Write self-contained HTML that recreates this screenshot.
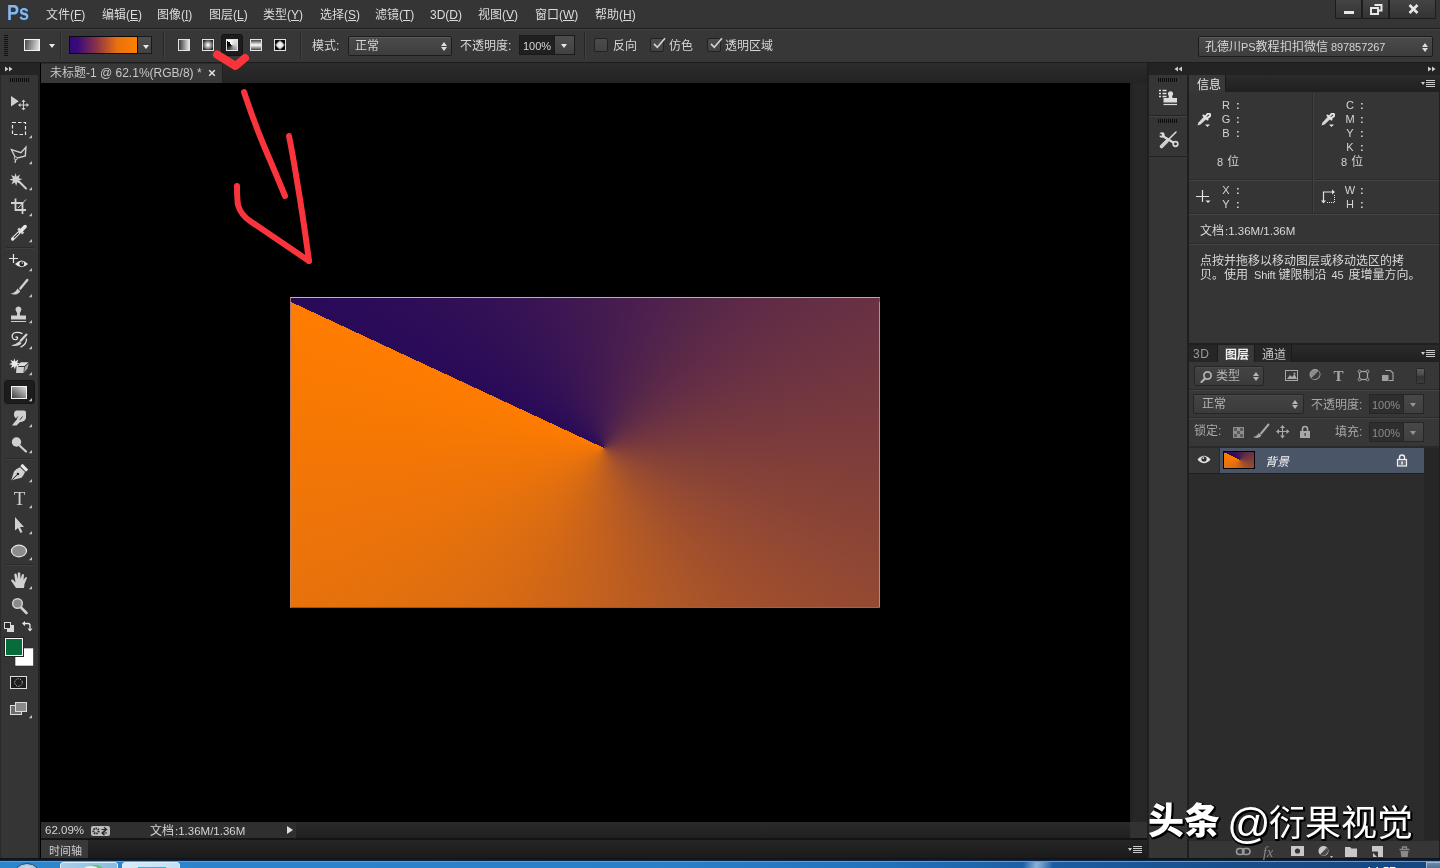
<!DOCTYPE html>
<html lang="zh-CN">
<head>
<meta charset="utf-8">
<title>未标题-1 @ 62.1%(RGB/8) *</title>
<style>
*{box-sizing:border-box;margin:0;padding:0}
html,body{width:1440px;height:868px;overflow:hidden;background:#000}
body{position:relative;font-family:"Liberation Sans","Noto Sans CJK SC",sans-serif;font-size:12px;color:#d6d6d6;line-height:1}
#root{position:absolute;left:0;top:0;width:1440px;height:868px;will-change:transform}
.a{position:absolute}
.t{position:absolute;white-space:nowrap;line-height:14px;height:14px}
/* ---------- top bars ---------- */
#menubar{left:0;top:0;width:1440px;height:28px;background:#353535}
#menuline{left:0;top:28px;width:1440px;height:1px;background:#1c1c1c}
#optbar{left:0;top:29px;width:1440px;height:33px;background:#373737;border-top:1px solid #444}
#optline{left:0;top:62px;width:1440px;height:1px;background:#1c1c1c}
.menu{top:8px;color:#dcdcdc;font-size:12px}
.menu u{text-decoration-thickness:1px;text-underline-offset:1px}

#pslogo{left:7px;top:1px;font-size:22px;font-weight:bold;color:#8fb6e0;line-height:24px;transform:scaleX(.82);transform-origin:0 0;text-shadow:1px 0 0 #123e70,0 1px 0 #123e70}
#winbtns{left:1335px;top:0;width:101px;height:18px}
.wb{top:0;height:19px;background:linear-gradient(#444,#333);border:1px solid #1d1d1d;border-top:none}

#grip1{left:4px;top:35px;width:4px;height:21px;background:repeating-linear-gradient(180deg,#111 0 1px,transparent 1px 2px)}
.l{font-size:11px;letter-spacing:-.1px}
.l2{font-size:11.500px;margin-left:1px}
.tri{width:0;height:0;border-left:3.5px solid transparent;border-right:3.5px solid transparent;border-top:4px solid #e8e8e8}
.vsep{top:32px;width:2px;height:26px;border-left:1px solid #262626;border-right:1px solid #434343}
#gradsw{left:69px;top:36px;width:69px;height:18px;border:1px solid #0a0a0a;background:linear-gradient(90deg,#33087a 0%,#3a0b78 12%,#8a3348 40%,#e8700e 70%,#ff8000 100%)}
#gradbtn{left:138px;top:36px;width:14px;height:18px;background:linear-gradient(#4e4e4e,#424242);border:1px solid #1a1a1a;border-left:none}
#gsel{left:221px;top:34px;width:22px;height:22px;background:#1c1c1c;border-radius:3px;border:1px solid #141414}
.gt{top:39px;width:12px;height:12px;border:1px solid #e4e4e4}
.dd{background:linear-gradient(#4b4b4b,#3d3d3d);border:1px solid #1c1c1c;border-radius:2px;box-shadow:inset 0 1px 0 #5a5a5a}
.ud{width:7px;height:9px}
.ud:before,.ud:after{content:"";position:absolute;left:0;width:0;height:0;border-left:3.5px solid transparent;border-right:3.5px solid transparent}
.ud:before{top:0;border-bottom:4px solid #dcdcdc}
.ud:after{top:5px;border-top:4px solid #dcdcdc}
#opin{left:519px;top:35px;width:36px;height:20px;background:#202020;border:1px solid #1a1a1a}
#opbtn{left:555px;top:35px;width:20px;height:20px;background:linear-gradient(#4e4e4e,#424242);border:1px solid #1a1a1a;border-left:none}
.cb{width:14px;height:14px;background:linear-gradient(#4c4c4c,#424242);border:1px solid #222;border-radius:2px}
/* ---------- canvas ---------- */
#tabbar{left:41px;top:63px;width:1106px;height:20px;background:linear-gradient(#2c2c2c,#232323)}
#doctab{left:41px;top:64px;width:182px;height:19px;background:#383838;border-right:1px solid #1f1f1f}
#canvas{left:41px;top:83px;width:1089px;height:739px;background:#000}
#vscroll{left:1130px;top:83px;width:17px;height:739px;background:linear-gradient(90deg,#212121,#272727 30%,#262626)}
#corner{left:1130px;top:822px;width:17px;height:16px;background:#323232}
#status{left:41px;top:822px;width:1089px;height:16px;background:linear-gradient(#2b2b2b,#1f1f1f)}
#statusl{left:41px;top:822px;width:255px;height:16px;background:#2f2f2f}
#timeline{left:41px;top:838px;width:1106px;height:20px;background:linear-gradient(#141414 0 2px,#252525 2px,#1b1b1b 20px)}
#tltab{left:41px;top:840px;width:47px;height:18px;background:#393939}

#doc{left:290px;top:297px;width:590px;height:311px;background:conic-gradient(from 295deg at 312.7px 149.8px,#290a59 0.0deg,#2f0e57 15.0deg,#351255 30.0deg,#3b1653 45.0deg,#421a51 60.0deg,#491e4f 75.0deg,#51234c 90.0deg,#5a2948 105.0deg,#642e45 120.0deg,#6e3441 135.0deg,#793a3d 150.0deg,#844138 165.0deg,#904734 180.0deg,#9c4d2f 195.0deg,#a7532a 210.0deg,#b35925 225.0deg,#be5e20 240.0deg,#c8631b 255.0deg,#d26816 270.0deg,#db6c12 285.0deg,#e3700e 300.0deg,#eb730a 315.0deg,#f27607 330.0deg,#f87903 345.0deg,#ff7c00 360.0deg);border:1px solid rgba(205,150,135,.5);border-top-color:rgba(200,190,215,.8);border-left-color:rgba(230,170,120,.6)}
#sticon{left:91px;top:826px;width:19px;height:10px;background:#bdbdbd;border-radius:2px}
.pmenu{width:14px;height:8px;background:linear-gradient(#ccc 0 1px,transparent 1px 2px,#ccc 2px 3px,transparent 3px 4px,#ccc 4px 5px,transparent 5px 6px,#ccc 6px 7px,transparent 7px) no-repeat 5px 0/9px 8px}
.pmenu:before{content:"";position:absolute;left:0;top:2px;border-left:2.5px solid transparent;border-right:2.5px solid transparent;border-top:3px solid #ccc}
/* ---------- toolbar ---------- */
#tbhead{left:0;top:63px;width:40px;height:12px;background:#242424}
#toolbar{left:0;top:75px;width:40px;height:783px;background:#353535;border-left:1px solid #2a2a2a;border-right:2px solid #222}
/* ---------- right ---------- */
#rightbg{left:1147px;top:63px;width:293px;height:795px;background:#1f1f1f}
#rhead{left:1149px;top:63px;width:291px;height:12px;background:#232323}
#iconstrip{left:1149px;top:75px;width:38px;height:783px;background:#353535}
#infopanel{left:1189px;top:75px;width:250px;height:268px;background:#353535}
#layerpanel{left:1189px;top:345px;width:250px;height:513px;background:#2c2c2c}

.ptabbar{background:linear-gradient(#2a2a2a,#202020)}
.ptab{background:#262626;color:#9a9a9a;border-right:1px solid #1a1a1a}
.ptab.on{background:#383838;color:#e6e6e6}
.hline{height:2px;border-top:1px solid #2b2b2b;border-bottom:1px solid #444}
.inf{font-size:11px;color:#d4d4d4}

.dim{background:linear-gradient(#434343,#3b3b3b);border-color:#262626;box-shadow:inset 0 1px 0 #4a4a4a}
.lin{width:35px;height:20px;background:#2e2e2e;border:1px solid #262626;color:#8c8c8c}
.lbtn{width:20px;height:20px;background:linear-gradient(#484848,#404040);border:1px solid #262626;border-left:none}
#thumb{left:1223px;top:451px;width:32px;height:18px;border:1px solid #000;background:conic-gradient(from 295deg at 52.9% 48.2%,#290a59 0.0deg,#2f0e57 15.0deg,#351255 30.0deg,#3b1653 45.0deg,#421a51 60.0deg,#491e4f 75.0deg,#51234c 90.0deg,#5a2948 105.0deg,#642e45 120.0deg,#6e3441 135.0deg,#793a3d 150.0deg,#844138 165.0deg,#904734 180.0deg,#9c4d2f 195.0deg,#a7532a 210.0deg,#b35925 225.0deg,#be5e20 240.0deg,#c8631b 255.0deg,#d26816 270.0deg,#db6c12 285.0deg,#e3700e 300.0deg,#eb730a 315.0deg,#f27607 330.0deg,#f87903 345.0deg,#ff7c00 360.0deg)}
#wm{left:1150px;top:798px;white-space:nowrap;color:#fff;line-height:48px;height:48px;text-shadow:2px 2px 0 #000,1px 1px 0 #000,2px 0 0 #000,0 2px 0 #000;font-family:"Liberation Sans","Noto Sans CJK SC",sans-serif}
#wm .w1{font-size:36px;font-weight:900}
#wm .w3{font-size:43px;font-weight:400;white-space:pre}
#wm .w2{font-size:36px;font-weight:400}
/* ---------- taskbar ---------- */
#taskbar{left:0;top:858px;width:1440px;height:10px;background:linear-gradient(#101418 0 1px,#0b1a30 1px 2px,#0b2346 2px 3px,#6b9bd0 3px 4px,transparent 4px),linear-gradient(90deg,#2c86cd 0,#2a80c8 45%,#2273bd 60%,#1b5ea4 72%,#174f8c 85%,#154680 100%);overflow:hidden}
#taskbar .tb{position:absolute;top:4px;height:8px;border:1px solid #dff0fb;border-radius:3px 3px 0 0}
#clock{left:1366px;top:866px;font-size:12px;color:#fff;line-height:12px;height:3px;overflow:hidden}
</style>
</head>
<body>
<div id="root">
<div class="a" id="menubar"></div>
<div class="a" id="menuline"></div>
<div class="a" id="optbar"></div>
<div class="a" id="optline"></div>
<div class="a" id="tabbar"></div>
<div class="a" id="doctab"></div>
<div class="a" id="canvas"></div>
<div class="a" id="vscroll"></div>
<div class="a" id="corner"></div>
<div class="a" id="status"></div>
<div class="a" id="statusl"></div>
<div class="a" id="timeline"></div>
<div class="a" id="tltab"></div>
<div class="a" id="tbhead"></div>
<div class="a" id="toolbar"></div>
<div class="a" id="rightbg"></div>
<div class="a" id="rhead"></div>
<div class="a" id="iconstrip"></div>
<div class="a" id="infopanel"></div>
<div class="a" id="layerpanel"></div>
<div class="a" id="taskbar"><div class="a" style="left:12px;top:5px;width:30px;height:30px;border-radius:50%;background:radial-gradient(circle at 50% 30%,#e8f0f6,#8fa9bf 60%,#5a7a96);border:1px solid #1d4d7c"></div><div class="tb" style="left:60px;width:58px;background:linear-gradient(90deg,#a9cde8,#8cbcdf)"><i class="a" style="left:22px;top:3px;width:16px;height:8px;border-radius:50%;background:#e9f6e4;box-shadow:4px -1px 0 #6cc46a"></i></div><div class="tb" style="left:122px;width:58px;background:linear-gradient(90deg,#d8ebf7,#c4dff2)"><i class="a" style="left:15px;top:4px;width:28px;height:6px;background:#0d2a55;border-top:1px solid #2fb4dc"></i></div><div class="a" style="left:1020px;top:4px;width:36px;height:8px;background:linear-gradient(100deg,transparent 10%,rgba(170,205,235,.75) 45%,rgba(170,205,235,.55) 60%,transparent 90%)"></div><div class="a" style="left:1426px;top:4px;width:14px;height:8px;background:linear-gradient(#6d8aa8,#4b6c90);border:1px solid #9fb6cf;border-right:none"></div></div>
<div class="a" id="clock">14:57</div>
<div class="a" id="pslogo">Ps</div>
<div class="t menu" style="left:46px">文件(<u>F</u>)</div>
<div class="t menu" style="left:102px">编辑(<u>E</u>)</div>
<div class="t menu" style="left:157px">图像(<u>I</u>)</div>
<div class="t menu" style="left:209px">图层(<u>L</u>)</div>
<div class="t menu" style="left:263px">类型(<u>Y</u>)</div>
<div class="t menu" style="left:320px">选择(<u>S</u>)</div>
<div class="t menu" style="left:375px">滤镜(<u>T</u>)</div>
<div class="t menu" style="left:430px">3D(<u>D</u>)</div>
<div class="t menu" style="left:478px">视图(<u>V</u>)</div>
<div class="t menu" style="left:535px">窗口(<u>W</u>)</div>
<div class="t menu" style="left:595px">帮助(<u>H</u>)</div>
<div class="a" id="winbtns"><div class="a wb" style="left:0;width:27px"><i class="a" style="left:8px;top:11px;width:10px;height:3px;background:#e6e6e6"></i></div><div class="a wb" style="left:27px;width:27px"><svg class="a" style="left:7px;top:4px" width="13" height="11" viewBox="0 0 13 11"><path d="M4.5 1h7v5.5h-2.5" fill="none" stroke="#e6e6e6" stroke-width="2"/><rect x="1" y="4" width="7" height="6" fill="none" stroke="#e6e6e6" stroke-width="2"/></svg></div><div class="a wb" style="left:54px;width:47px"><svg class="a" style="left:18px;top:4px" width="11" height="10" viewBox="0 0 11 10"><path d="M1.5 1l8 8M9.5 1l-8 8" stroke="#e6e6e6" stroke-width="2.6"/></svg></div></div>
<!--MENU-->
<div class="a" id="grip1"></div>
<div class="a gicon" style="left:24px;top:39px;width:16px;height:12px;background:linear-gradient(100deg,#4a4a4a,#e8e8e8);border:1px solid #f4f4f4"></div>
<div class="a tri" style="left:49px;top:44px"></div>
<div class="a vsep" style="left:60px"></div>
<div class="a" id="gradsw"></div>
<div class="a" id="gradbtn"><div class="a tri" style="left:5px;top:8px"></div></div>
<div class="a vsep" style="left:163px"></div>
<div class="a" id="gsel"></div>
<div class="a gt" style="left:178px;background:linear-gradient(90deg,#3a3a3a,#e6e6e6)"></div>
<div class="a gt" style="left:202px;background:radial-gradient(circle at 50% 50%,#fff 5%,#222 85%)"></div>
<div class="a gt" style="left:226px;background:conic-gradient(from 315deg at 50% 50%,#fff 0deg,#f0f0f0 45deg,#ccc 135deg,#808080 225deg,#111 300deg,#000 360deg)"></div>
<div class="a gt" style="left:250px;background:linear-gradient(180deg,#444,#fff 50%,#444)"></div>
<div class="a gt" style="left:274px;background:#0a0a0a"><svg class="a" style="left:0;top:0" width="10" height="10" viewBox="0 0 10 10"><defs><radialGradient id="dg"><stop offset="0" stop-color="#fff"/><stop offset=".5" stop-color="#ddd"/><stop offset="1" stop-color="#555"/></radialGradient></defs><path d="M5 0l5 5-5 5-5-5z" fill="url(#dg)"/></svg></div>
<div class="a vsep" style="left:300px"></div>
<div class="t" style="left:312px;top:39px">模式:</div>
<div class="a dd" style="left:348px;top:36px;width:104px;height:20px"><span class="t" style="left:6px;top:2px">正常</span><i class="a ud" style="right:3px;top:5px"></i></div>
<div class="t" style="left:460px;top:39px">不透明度:</div>
<div class="a" id="opin"><span class="t" style="left:3px;top:3px;font-size:11px">100%</span></div>
<div class="a" id="opbtn"><div class="a tri" style="left:6px;top:8px"></div></div>
<div class="a vsep" style="left:584px"></div>
<div class="a cb" style="left:594px;top:38px"></div>
<div class="t" style="left:613px;top:39px">反向</div>
<div class="a cb" style="left:650px;top:38px"><svg class="a" style="left:-1px;top:-3px" width="18" height="16" viewBox="-1 -2 18 16"><path d="M3 5.800l3.300 3.500L14 .200" fill="none" stroke="#d0d0d0" stroke-width="1.700"/></svg></div>
<div class="t" style="left:669px;top:39px">仿色</div>
<div class="a cb" style="left:707px;top:38px"><svg class="a" style="left:-1px;top:-3px" width="18" height="16" viewBox="-1 -2 18 16"><path d="M3 5.800l3.300 3.500L14 .200" fill="none" stroke="#d0d0d0" stroke-width="1.700"/></svg></div>
<div class="t" style="left:725px;top:39px">透明区域</div>
<div class="a dd" style="left:1198px;top:36px;width:235px;height:21px"><span class="t" style="left:6px;top:3px">孔德川<span class="l">PS</span>教程<span class="l" style="letter-spacing:-2.5px"> </span>扣扣微信<span class="l"> 897857267</span></span><i class="a ud" style="right:3px;top:6px"></i></div>
<!--OPTIONS-->
<div class="t" style="left:50px;top:66px;color:#c8c8c8">未标题-1 @ 62.1%(RGB/8) *</div>
<svg class="a" style="left:208px;top:69px" width="8" height="8" viewBox="0 0 8 8"><path d="M1.2 1.2l5.6 5.6M6.8 1.2L1.2 6.8" stroke="#e0e0e0" stroke-width="1.6"/></svg>
<div class="a" id="doc"></div>
<div class="t" style="left:45px;top:823px;color:#d4d4d4;font-size:11.500px">62.09%</div>
<div class="a" id="sticon"><svg width="19" height="10" viewBox="0 0 19 10"><circle cx="5" cy="5" r="2.6" fill="none" stroke="#2a2a2a" stroke-width="2" stroke-dasharray="1.4 0.9"/><path d="M10.5 3.5h4.5M13 1.2l2.6 2.3-2.6 2.3M16 7h-4.5M13.5 4.8L11 7l2.5 2.2" fill="none" stroke="#2a2a2a" stroke-width="1.2"/></svg></div>
<div class="t" style="left:150px;top:824px;color:#d4d4d4">文档<span class="l2">:1.36M/1.36M</span></div>
<div class="a" style="left:287px;top:826px;width:0;height:0;border-top:4.5px solid transparent;border-bottom:4.5px solid transparent;border-left:6px solid #dedede"></div>
<div class="t" style="left:49px;top:844px;color:#cfcfcf;font-size:11px">时间轴</div>
<div class="a pmenu" style="left:1128px;top:846px"></div>
<!--DOC-->
<svg class="a" id="tools" style="left:0;top:0" width="41" height="868" viewBox="0 0 41 868">
<defs><linearGradient id="gtool" x1="0" y1="1" x2="1" y2="0"><stop offset="0" stop-color="#3a3a3a"/><stop offset="1" stop-color="#e0e0e0"/></linearGradient></defs>
<path d="M5 66.500l3.500 2.500-3.500 2.500zM9 66.500l3.500 2.500-3.500 2.500z" fill="#cfcfcf"/>
<path d="M10.500 78v4M12.500 78v4M14.500 78v4M16.500 78v4M18.500 78v4M20.500 78v4M22.500 78v4M24.500 78v4M26.500 78v4M28.500 78v4" stroke="#0c0c0c" stroke-width="1"/>
<g stroke="#2a2a2a" stroke-width="1"><path d="M6 247.500h28M6 458.500h28M6 564.500h28"/></g>
<g stroke="#3f3f3f" stroke-width="1"><path d="M6 248.500h28M6 459.500h28M6 565.500h28"/></g>
<!-- move -->
<path d="M11 96v10.500l7.800-5.200z" fill="#d0d0d0"/>
<path d="M23.500 101v8M19.500 105h8" stroke="#d0d0d0" stroke-width="1" fill="none"/>
<path d="M23.500 99.500l-2 2.500h4zM23.500 110.500l-2-2.500h4zM18 105l2.500-2v4zM29 105l-2.500-2v4z" fill="#d0d0d0"/>
<!-- marquee -->
<rect x="12.500" y="122.500" width="13" height="12" fill="none" stroke="#e8e8e8" stroke-width="1.200" stroke-dasharray="3.500 2"/>
<path d="M32 135v3.200h-3.200z" fill="#c4c4c4"/>
<!-- polygonal lasso -->
<path d="M11.500 149.700l9.400 3 5-5.500-.600 8.800-9.500 2.500z" fill="none" stroke="#d0d0d0" stroke-width="1.400" stroke-linejoin="miter"/>
<path d="M15.800 159l-.800 3.800" stroke="#d0d0d0" stroke-width="1.300" fill="none"/>
<circle cx="15.800" cy="158.300" r="1.500" fill="#353535" stroke="#d0d0d0" stroke-width="1"/>
<path d="M32 161v3.200h-3.200z" fill="#c4c4c4"/>
<!-- wand -->
<path d="M15.500 173l1.200 3.700 3.300-2.100-1.300 3.700 3.800.700-3.600 1.400 1.800 3.300-3.500-1.400-1 3.700-1.300-3.600-3.400 1.800 1.600-3.500-3.700-1 3.600-1.300-1.900-3.300 3.500 1.500z" fill="#d0d0d0"/>
<path d="M19 181.500l7 7" stroke="#d0d0d0" stroke-width="2" stroke-linecap="round"/>
<path d="M32 187v3.200h-3.200z" fill="#c4c4c4"/>
<!-- crop -->
<path d="M15.500 198.500v11.500h10.500M11 203h11.500v11" fill="none" stroke="#d0d0d0" stroke-width="1.800"/>
<path d="M26 199.500l-8 8.500" stroke="#d0d0d0" stroke-width="1"/>
<path d="M32 213v3.200h-3.200z" fill="#c4c4c4"/>
<!-- eyedropper -->
<path d="M12.600 239l6.700-6.700" stroke="#e8e8e8" stroke-width="3.200" stroke-linecap="round"/>
<path d="M13.800 237.800l5-5" stroke="#1c1c1c" stroke-width="1.100"/>
<path d="M18.200 228.500l5 5" stroke="#d0d0d0" stroke-width="2.600"/>
<path d="M21.500 230.200l3.600-3.600" stroke="#e8e8e8" stroke-width="3.600" stroke-linecap="round"/>
<path d="M32 239v3.200h-3.200z" fill="#c4c4c4"/>
<!-- spot heal -->
<path d="M13.500 254v9M9 258.500h9" stroke="#e8e8e8" stroke-width="1.200"/>
<path d="M15 264q6.500-7 13 0q-6.500 6.500-13 0z" fill="#e8e8e8"/>
<circle cx="21.800" cy="264" r="2.400" fill="#262626"/><circle cx="22.300" cy="263" r=".700" fill="#ddd"/>
<path d="M32 268v3.200h-3.200z" fill="#c4c4c4"/>
<!-- brush -->
<path d="M27.300 280l-7 8.500" stroke="#d0d0d0" stroke-width="2.400" stroke-linecap="round"/>
<path d="M10.300 293.800q5-.800 7.200-5.300l2.700 2.700q-3 5-9.900 2.600z" fill="#d0d0d0"/>
<path d="M32 294v3.200h-3.200z" fill="#c4c4c4"/>
<!-- stamp -->
<path d="M17 315.500q.800-2.500-.800-4.300a2.900 2.900 0 1 1 4.600 0q-1.600 1.800-.800 4.300h6v4h-15v-4z" fill="#d0d0d0"/>
<path d="M11 321.500h15" stroke="#d0d0d0" stroke-width="1"/>
<path d="M32 320v3.200h-3.200z" fill="#c4c4c4"/>
<!-- history brush -->
<path d="M22.500 333.600q-4.500-2-8-.800-3 1.800-2.200 4.700.900 2.500 3.700 2.200 2-.700 1.500-2.200-1-1.200-2-.200" fill="none" stroke="#e8e8e8" stroke-width="1.200"/>
<path d="M26.500 338.500q.500 5.500-6 8.800" fill="none" stroke="#e8e8e8" stroke-width="1.200"/>
<path d="M26.300 334.700l-5.600 6" stroke="#d0d0d0" stroke-width="2.400" stroke-linecap="round"/>
<path d="M19.500 341.300l2 2q-3 4-10.500 2.200 5-1 8.500-4.200z" fill="#d0d0d0"/>
<path d="M32 346v3.200h-3.200z" fill="#c4c4c4"/>
<!-- magic eraser -->
<path d="M14.300 358.200l1.100 3.200 2.900-1.800-1.100 3.100 3.200.700-3.100 1.200 1.600 2.900-3.100-1.200-.900 3.300-1.100-3.200-3 1.600 1.400-3.100-3.300-.900 3.200-1.100-1.700-2.900 3.100 1.300z" fill="#e8e8e8"/>
<path d="M16.500 367h7.500l-.5 6h-7.500z" fill="#cfcfcf"/>
<path d="M17.500 366l3.300-3.700h7.700l-4 3.700z" fill="#dedede"/>
<path d="M24.800 367l4-3.800-1.200 5-3.300 4.300z" fill="#a8a8a8"/>
<path d="M32 372v3.200h-3.200z" fill="#c4c4c4"/>
<!-- gradient selected -->
<rect x="4.500" y="380.500" width="30" height="23" rx="3" fill="#1c1c1c" stroke="#161616"/>
<rect x="11.500" y="386.500" width="15" height="12" fill="url(#gtool)" stroke="#f0f0f0" stroke-width="1"/>
<path d="M32 398v3.200h-3.200z" fill="#c4c4c4"/>
<!-- smudge -->
<path d="M16 410.500h8q2 0 2 2v5.500q-1 3.500-5 4h-1l-3.500 3.500h-4.500l5-6.500q-3.500-2-3-5 0-3 2-3.500z" fill="#d0d0d0"/>
<path d="M15.500 420.500l2.200-4M20 419.800l2.500-3.300" stroke="#3a3a3a" stroke-width="1"/>
<path d="M32 424v3.200h-3.200z" fill="#c4c4c4"/>
<!-- dodge -->
<circle cx="16.500" cy="442" r="4.700" fill="#d0d0d0"/>
<path d="M20 446l6 5.500" stroke="#d0d0d0" stroke-width="2.200" stroke-linecap="round"/>
<path d="M32 450v3.200h-3.200z" fill="#c4c4c4"/>
<!-- pen -->
<path d="M11.200 480.300l2.800-8.800q2-3 6-4.200l5 4.700q-1.500 4-3.500 5.800z" fill="#d0d0d0"/>
<path d="M22.500 463.800l5.700 5.700-2.200 2.200-5.700-5.700z" fill="#e8e8e8"/>
<path d="M12 479.800l5.500-5.500" stroke="#1c1c1c" stroke-width="1"/>
<circle cx="17.900" cy="474" r="1.200" fill="#1c1c1c"/>
<path d="M32 479v3.200h-3.200z" fill="#c4c4c4"/>
<!-- T -->
<text x="19.500" y="505" font-family="Liberation Serif,serif" font-size="19" fill="#d0d0d0" text-anchor="middle">T</text>
<path d="M32 505v3.200h-3.200z" fill="#c4c4c4"/>
<!-- path select -->
<path d="M15 517v13.500l3-2.500 2.500 5 2-1-2.500-5h4z" fill="#d0d0d0"/>
<path d="M32 531v3.200h-3.200z" fill="#c4c4c4"/>
<!-- ellipse -->
<ellipse cx="19" cy="551" rx="7.500" ry="5.800" fill="#8c8c8c" stroke="#e8e8e8" stroke-width="1.200"/>
<path d="M32 557v3.200h-3.200z" fill="#c4c4c4"/>
<!-- hand -->
<path d="M16 588L11 580.500Q11.500 579 13 579.800L15.500 582.500L14.200 574.500Q15 573 16.500 574L17.800 579L17.800 573Q19 571.500 20.200 573L20.500 579L22 574.500Q23.300 573.300 24 574.800L23.500 580L25.200 577.500Q26.500 576.500 27 578L24.500 584L24 588Z" fill="#d0d0d0"/>
<path d="M32 586v3.200h-3.200z" fill="#c4c4c4"/>
<!-- zoom -->
<circle cx="17.500" cy="603.500" r="4.800" fill="#8a8a8a" stroke="#d0d0d0" stroke-width="1.500"/>
<path d="M21.500 608l5 5" stroke="#d0d0d0" stroke-width="2.600" stroke-linecap="round"/>
<!-- default colours / swap -->
<rect x="7.500" y="625.500" width="6" height="6" fill="#d8d8d8" stroke="#d8d8d8"/>
<rect x="4.500" y="622.500" width="6" height="6" fill="#2a2a2a" stroke="#d8d8d8"/>
<path d="M24.500 623.500h3.500q2 0 2 2v3" fill="none" stroke="#e8e8e8" stroke-width="1.300"/>
<path d="M22 623.500l3-2.500v5zM30 631.500l-2.500-3h5z" fill="#e8e8e8"/>
<!-- fg/bg -->
<rect x="15" y="648" width="18.500" height="18" fill="#fff" stroke="#2a2a2a" stroke-width=".600"/>
<rect x="5.500" y="638.500" width="17" height="17" fill="#076b3b" stroke="#f4f4f4" stroke-width="1"/>
<rect x="4.500" y="637.500" width="19" height="19" fill="none" stroke="#222" stroke-width="1"/>
<!-- quick mask -->
<rect x="10.500" y="676.500" width="16" height="12" fill="#1d1d1d" stroke="#dcdcdc" stroke-width="1"/>
<circle cx="18.500" cy="682.500" r="3.800" fill="none" stroke="#e8e8e8" stroke-width="1" stroke-dasharray="1 1.390"/>
<!-- screen mode -->
<rect x="10.500" y="705.500" width="11" height="9" fill="#6d6d6d" stroke="#dcdcdc" stroke-width="1"/>
<rect x="15.500" y="702.500" width="11" height="9" fill="#8a8a8a" stroke="#dcdcdc" stroke-width="1"/>
<path d="M32 715v3.200h-3.200z" fill="#c4c4c4"/>
</svg>
<!--TOOLS-->
<svg class="a" style="left:1147px;top:63px" width="293" height="100" viewBox="1147 63 293 100">
<path d="M1178 66.500v5l-3.500-2.500zM1182 66.500v5l-3.500-2.500z" fill="#cfcfcf"/>
<path d="M1428 66.500v5l3.500-2.500zM1432 66.500v5l3.500-2.500z" fill="#cfcfcf"/>
<path d="M1158.500 78v4M1160.500 78v4M1162.500 78v4M1164.500 78v4M1166.500 78v4M1168.500 78v4M1170.500 78v4M1172.500 78v4M1174.500 78v4M1176.500 78v4" stroke="#0c0c0c"/>
<path d="M1158.500 119v4M1160.500 119v4M1162.500 119v4M1164.500 119v4M1166.500 119v4M1168.500 119v4M1170.500 119v4M1172.500 119v4M1174.500 119v4M1176.500 119v4" stroke="#0c0c0c"/>
<path d="M1149 115.500h38M1149 156.500h38" stroke="#222"/>
<path d="M1149 116.500h38" stroke="#444"/>
<!-- history/clone icon -->
<path d="M1159 90.500h2M1162.500 90.500h4M1159 93.500h2M1162.500 93.500h4M1159 96.500h2M1162.500 96.500h4" stroke="#e0e0e0" stroke-width="1.600"/>
<path d="M1168.500 98q1-2-.5-3.500a2.600 2.600 0 1 1 5 0q-1.500 1.500-.5 3.500h4.500v4.500h-13.500v-4.500z" fill="#dcdcdc"/>
<path d="M1163.500 104.500h13.500" stroke="#dcdcdc" stroke-width="1.200"/>
<!-- tools icon -->
<path d="M1161.500 146.500l5.500-5.500" stroke="#d0d0d0" stroke-width="3.600" stroke-linecap="round"/>
<path d="M1167 141l9-9" stroke="#d8d8d8" stroke-width="1.600" stroke-linecap="round"/>
<path d="M1163.500 136.500l10.500 6.500" stroke="#d8d8d8" stroke-width="2.200"/>
<circle cx="1162" cy="135" r="2.700" fill="#d8d8d8"/>
<path d="M1158.500 134.500l3.200.300" stroke="#353535" stroke-width="1.800"/>
<circle cx="1175.500" cy="144" r="2.300" fill="#353535" stroke="#d8d8d8" stroke-width="1.700"/>
</svg>
<!--RIGHT-->
<div class="a ptabbar" style="left:1189px;top:75px;width:251px;height:17px"></div>
<div class="a ptab on" style="left:1189px;top:75px;width:37px;height:17px"><span class="t" style="left:8px;top:3px">信息</span></div>
<div class="a pmenu" style="left:1421px;top:80px"></div>
<div class="a hline" style="left:1189px;top:179px;width:250px"></div>
<div class="a hline" style="left:1189px;top:213px;width:250px"></div>
<div class="a hline" style="left:1189px;top:243px;width:250px"></div>
<div class="a" style="left:1312px;top:94px;width:2px;height:119px;border-left:1px solid #2a2a2a;border-right:1px solid #434343"></div>
<svg class="a" style="left:1197px;top:113px" width="14" height="15" viewBox="0 0 14 15"><path d="M0.500 12.500l1-3 5.500-6 2.500 2.500-6 5.500z" fill="#d8d8d8"/><path d="M6.500 2.500l4 4M8.500 3.500l2-2.500a1.500 1.500 0 0 1 2.200 2.200l-2.700 2.200" stroke="#e4e4e4" stroke-width="2" stroke-linecap="round" fill="none"/><path d="M8 11.500h5l-2.500 2.500z" fill="#e4e4e4"/></svg>
<svg class="a" style="left:1321px;top:113px" width="14" height="15" viewBox="0 0 14 15"><path d="M0.500 12.500l1-3 5.500-6 2.500 2.500-6 5.500z" fill="#d8d8d8"/><path d="M6.500 2.500l4 4M8.500 3.500l2-2.500a1.500 1.500 0 0 1 2.200 2.200l-2.700 2.200" stroke="#e4e4e4" stroke-width="2" stroke-linecap="round" fill="none"/><path d="M8 11.500h5l-2.500 2.500z" fill="#e4e4e4"/></svg>
<svg class="a" style="left:1196px;top:189px" width="15" height="15" viewBox="0 0 15 15"><path d="M6.500 1v12M0 7.500h13" stroke="#e0e0e0" stroke-width="1.200"/><path d="M9.500 11.500h5l-2.500 2.500z" fill="#e4e4e4"/></svg>
<svg class="a" style="left:1320px;top:189px" width="16" height="16" viewBox="0 0 16 16"><path d="M3.500 13v-10h10" fill="none" stroke="#e0e0e0" stroke-width="1.200"/><path d="M12 .5l3 2.500-3 2.500zM1 11.500l2.500 3 2.500-3z" fill="#e0e0e0"/><path d="M7 13.500h7.500v-8" fill="none" stroke="#e0e0e0" stroke-width="1" stroke-dasharray="1 1"/></svg>
<div class="t inf" style="left:1218px;top:98px;width:16px;text-align:center">R</div><div class="t inf" style="left:1236px;top:98px;font-weight:bold">:</div>
<div class="t inf" style="left:1218px;top:112px;width:16px;text-align:center">G</div><div class="t inf" style="left:1236px;top:112px;font-weight:bold">:</div>
<div class="t inf" style="left:1218px;top:126px;width:16px;text-align:center">B</div><div class="t inf" style="left:1236px;top:126px;font-weight:bold">:</div>
<div class="t inf" style="left:1342px;top:98px;width:16px;text-align:center">C</div><div class="t inf" style="left:1360px;top:98px;font-weight:bold">:</div>
<div class="t inf" style="left:1342px;top:112px;width:16px;text-align:center">M</div><div class="t inf" style="left:1360px;top:112px;font-weight:bold">:</div>
<div class="t inf" style="left:1342px;top:126px;width:16px;text-align:center">Y</div><div class="t inf" style="left:1360px;top:126px;font-weight:bold">:</div>
<div class="t inf" style="left:1342px;top:140px;width:16px;text-align:center">K</div><div class="t inf" style="left:1360px;top:140px;font-weight:bold">:</div>
<div class="t inf" style="left:1218px;top:183px;width:16px;text-align:center">X</div><div class="t inf" style="left:1236px;top:183px;font-weight:bold">:</div>
<div class="t inf" style="left:1218px;top:197px;width:16px;text-align:center">Y</div><div class="t inf" style="left:1236px;top:197px;font-weight:bold">:</div>
<div class="t inf" style="left:1342px;top:183px;width:16px;text-align:center">W</div><div class="t inf" style="left:1360px;top:183px;font-weight:bold">:</div>
<div class="t inf" style="left:1342px;top:197px;width:16px;text-align:center">H</div><div class="t inf" style="left:1360px;top:197px;font-weight:bold">:</div>
<div class="t inf" style="left:1217px;top:155px">8<span style="font-size:12px;margin-left:4px">位</span></div>
<div class="t inf" style="left:1341px;top:155px">8<span style="font-size:12px;margin-left:4px">位</span></div>
<div class="t" style="left:1200px;top:224px;color:#d8d8d8">文档<span class="l2">:1.36M/1.36M</span></div>
<div class="t" style="left:1200px;top:254px;color:#d8d8d8">点按并拖移以移动图层或移动选区的拷</div>
<div class="t" style="left:1200px;top:268px;color:#d8d8d8">贝。使用<span class="l" style="margin-left:3px;white-space:pre"> Shift </span>键限制沿<span class="l" style="margin:0 2px;white-space:pre"> 45 </span>度增量方向。</div>
<!--INFO-->
<div class="a" style="left:1189px;top:343px;width:251px;height:2px;background:#1f1f1f"></div>
<div class="a ptabbar" style="left:1189px;top:345px;width:250px;height:17px"></div>
<div class="a ptab" style="left:1189px;top:345px;width:29px;height:17px"><span class="t" style="left:4px;top:2px;letter-spacing:.5px">3D</span></div>
<div class="a ptab on" style="left:1218px;top:345px;width:37px;height:17px"><span class="t" style="left:7px;top:3px;font-weight:bold;color:#f0f0f0">图层</span></div>
<div class="a ptab" style="left:1255px;top:345px;width:37px;height:17px;color:#c4c4c4"><span class="t" style="left:7px;top:3px">通道</span></div>
<div class="a pmenu" style="left:1421px;top:350px"></div>
<div class="a" style="left:1189px;top:362px;width:250px;height:86px;background:#373737"></div>
<div class="a dd dim" style="left:1194px;top:366px;width:70px;height:20px"><svg class="a" style="left:5px;top:3px" width="13" height="13" viewBox="0 0 13 13"><circle cx="7.500" cy="5.500" r="3.600" fill="none" stroke="#b0b0b0" stroke-width="1.800"/><path d="M5 8.500l-3.500 3.500" stroke="#b0b0b0" stroke-width="2.200" stroke-linecap="round"/></svg><span class="t" style="left:21px;top:2px;color:#b4b4b4">类型</span><i class="a ud" style="right:3px;top:5px;opacity:.75"></i></div>
<svg class="a" style="left:1284px;top:368px" width="142" height="17" viewBox="1284 368 142 17">
<rect x="1285.500" y="370.500" width="12" height="10" fill="none" stroke="#a8a8a8"/>
<path d="M1287 379l3-4 2 2 2.500-3 2.500 5z" fill="#a8a8a8"/><circle cx="1294.500" cy="373.500" r="1" fill="#a8a8a8"/>
<circle cx="1315" cy="374.500" r="5" fill="#8a8a8a" stroke="#a8a8a8"/><path d="M1311.500 378l7-7a5 5 0 0 1-7 7z" fill="#3a3a3a"/>
<text x="1338.500" y="380.500" font-family="Liberation Serif,serif" font-weight="bold" font-size="15" text-anchor="middle" fill="#a8a8a8">T</text>
<rect x="1359.500" y="371.500" width="8" height="8" fill="none" stroke="#a8a8a8" stroke-width="1.200"/>
<g fill="#373737" stroke="#a8a8a8" stroke-width=".9"><circle cx="1359.500" cy="371.500" r="1.400"/><circle cx="1367.500" cy="371.500" r="1.400"/><circle cx="1359.500" cy="379.500" r="1.400"/><circle cx="1367.500" cy="379.500" r="1.400"/></g>
<path d="M1385.500 370.500h5l2.500 2.500v7.500h-4" fill="none" stroke="#a8a8a8" stroke-width="1.100"/><rect x="1382" y="375" width="6.500" height="6" fill="#a0a0a0"/>
<linearGradient id="tg" x1="0" y1="0" x2="0" y2="1"><stop offset="0" stop-color="#606060"/><stop offset=".45" stop-color="#4a4a4a"/><stop offset=".5" stop-color="#333"/><stop offset="1" stop-color="#3c3c3c"/></linearGradient>
<rect x="1416.500" y="368.500" width="8" height="15" rx="1" fill="url(#tg)" stroke="#262626"/>
</svg>
<div class="a hline" style="left:1189px;top:389px;width:250px"></div>
<div class="a dd dim" style="left:1193px;top:394px;width:111px;height:20px"><span class="t" style="left:8px;top:2px;color:#b4b4b4">正常</span><i class="a ud" style="right:4px;top:5px;opacity:.75"></i></div>
<div class="t" style="left:1311px;top:398px;color:#a8a8a8">不透明度:</div>
<div class="a lin" style="left:1369px;top:394px"><span class="t" style="left:2px;top:3px;font-size:11px">100%</span></div>
<div class="a lbtn" style="left:1404px;top:394px"><div class="a tri" style="left:6px;top:8px;opacity:.5"></div></div>
<div class="a hline" style="left:1189px;top:417px;width:250px"></div>
<div class="t" style="left:1194px;top:424px;color:#a8a8a8">锁定:</div>
<svg class="a" style="left:1230px;top:422px" width="84" height="18" viewBox="1230 422 84 18">
<rect x="1233" y="427" width="11" height="11" fill="#8e8e8e"/>
<path d="M1234 428h3v3h-3zM1240 428h3v3h-3zM1237 431h3v3h-3zM1234 434h3v3h-3zM1240 434h3v3h-3z" fill="#5a5a5a"/>
<path d="M1268.500 424.500l-7.500 9" stroke="#a8a8a8" stroke-width="2" stroke-linecap="round"/>
<path d="M1253 437q4-.5 5.500-4l3 2.500q-2.500 4-8.500 1.500z" fill="#a8a8a8"/>
<path d="M1282.500 427v9.500M1277.500 431.500h10.500" stroke="#a8a8a8" stroke-width="1.200"/>
<path d="M1282.500 425l-2.500 3h5zM1282.500 438.500l-2.500-3h5zM1276 431.500l3-2.500v5zM1289.500 431.500l-3-2.500v5z" fill="#a8a8a8"/>
<rect x="1300" y="431" width="10" height="7" fill="#a8a8a8"/><path d="M1302.500 431v-2a2.500 2.500 0 0 1 5 0v2" fill="none" stroke="#a8a8a8" stroke-width="1.600"/><rect x="1304.500" y="433" width="1.200" height="3" fill="#3a3a3a"/>
</svg>
<div class="t" style="left:1335px;top:425px;color:#a8a8a8">填充:</div>
<div class="a lin" style="left:1369px;top:422px"><span class="t" style="left:2px;top:3px;font-size:11px">100%</span></div>
<div class="a lbtn" style="left:1404px;top:422px"><div class="a tri" style="left:6px;top:8px;opacity:.5"></div></div>
<div class="a" style="left:1189px;top:446px;width:250px;height:2px;background:#2a2a2a"></div>
<div class="a" style="left:1424px;top:448px;width:15px;height:392px;background:#262626"></div>
<div class="a" style="left:1189px;top:448px;width:31px;height:25px;background:#363636;border-right:1px solid #2a2a2a"></div>
<div class="a" style="left:1220px;top:448px;width:204px;height:25px;background:#4b5568"></div>
<div class="a" style="left:1189px;top:473px;width:235px;height:1px;background:#1e1e1e"></div>
<svg class="a" style="left:1197px;top:454px" width="14" height="11" viewBox="0 0 14 11"><path d="M.5 5.500q6.500-7.500 13 0q-6.500 7.500-13 0z" fill="#e2e2e2"/><circle cx="7" cy="5" r="2.600" fill="#2c2c2c"/><circle cx="6.300" cy="4.200" r=".9" fill="#ddd"/></svg>
<div class="a" id="thumb"></div>
<div class="t" style="left:1265px;top:455px;font-style:italic;color:#f2f2f2;font-size:12px">背景</div>
<svg class="a" style="left:1396px;top:453px" width="12" height="14" viewBox="0 0 12 14"><rect x="1.500" y="6.500" width="9" height="6.500" fill="#6a7080" stroke="#f0f0f0" stroke-width="1.200"/><path d="M3.500 6.500v-2a2.500 2.500 0 0 1 5 0v2" fill="none" stroke="#f0f0f0" stroke-width="1.400"/><rect x="5.300" y="8.500" width="1.500" height="3" fill="#f0f0f0"/></svg>
<div class="a" style="left:1189px;top:840px;width:250px;height:18px;background:#363636;border-top:1px solid #2a2a2a"></div>
<svg class="a" style="left:1230px;top:843px" width="190" height="18" viewBox="1230 842 190 18">
<g fill="none" stroke="#9a9a9a" stroke-width="1.600"><rect x="1236.500" y="847.500" width="7.500" height="6" rx="3"/><rect x="1242.500" y="847.500" width="7.500" height="6" rx="3"/></g>
<text x="1263" y="856" font-family="Liberation Serif,serif" font-style="italic" font-size="14" fill="#8a8a8a">fx</text>
<rect x="1291" y="845" width="13" height="10" fill="#c8c8c8"/><circle cx="1297.500" cy="850" r="2.600" fill="#363636"/>
<circle cx="1323.500" cy="850" r="5" fill="#c8c8c8"/><path d="M1320 853.500l7-7a5 5 0 0 1-7 7z" fill="#4a4a4a"/><path d="M1330 855h3l-1.500 2z" fill="#c8c8c8"/>
<path d="M1345 846h5l1.500 1.500h5.500v8.500h-12z" fill="#c8c8c8"/>
<path d="M1372 845h11v11h-5v-5.500h-6z" fill="#c8c8c8"/><path d="M1373 852l4 4h-4z" fill="#c8c8c8"/>
<path d="M1399.500 848.500h10M1402.500 848v-2h4v2" fill="none" stroke="#8a8a8a" stroke-width="1.300"/><path d="M1400.500 850h8l-.800 6h-6.400z" fill="#8a8a8a"/>
</svg>
<!--LAYERS-->
<div class="a" id="wm"><span class="a w1" style="left:-2px;top:0">头条</span><span class="a w3" style="left:77px;top:1px">@</span><span class="a w2" style="left:119px;top:2px">衍果视觉</span></div>
<svg class="a" id="redarrow" style="left:200px;top:40px" width="130" height="235" viewBox="200 40 130 235">
<g fill="none" stroke="#f9343c" stroke-linecap="round" stroke-linejoin="round">
<path d="M217 54.500l18.500 11.500 9.500-8" stroke-width="8"/>
<path d="M244 92q10 30 20 54 12 28 21 50" stroke-width="6"/>
<path d="M289 136q4 20 8 45 6 35 12 80" stroke-width="6"/>
<path d="M237 186q0 12 1 19 3 10 12 16 25 17 59 40" stroke-width="6"/>
</g></svg>
<!--OVERLAY-->
</div>
</body>
</html>
